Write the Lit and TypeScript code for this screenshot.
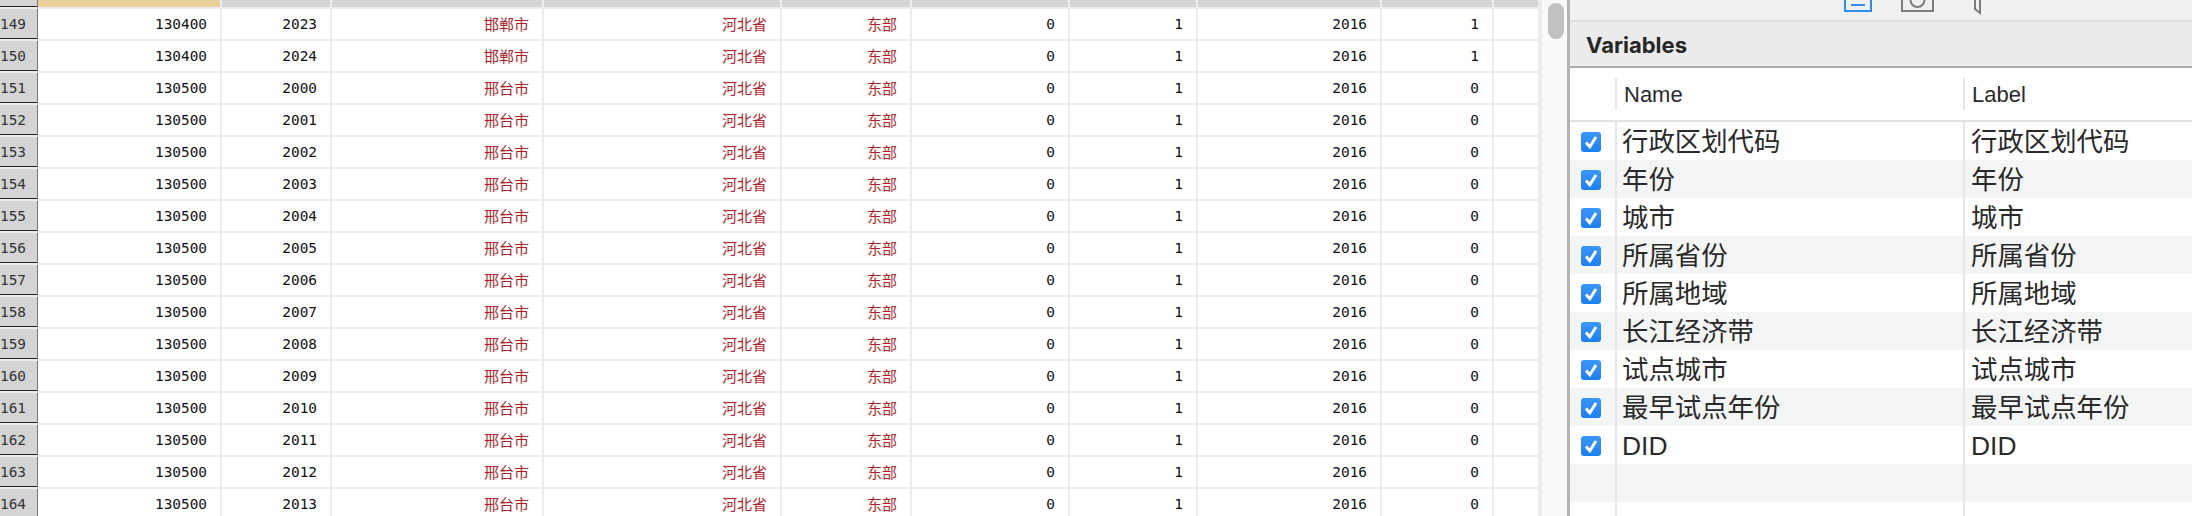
import { LitElement, html, css, svg } from 'lit';
import { customElement } from 'lit/decorators.js';

type Row = [number, number, number, string, string, string, number, number, number, number];

const rows: Row[] = [
  [149, 130400, 2023, '邯郸市', '河北省', '东部', 0, 1, 2016, 1],
  [150, 130400, 2024, '邯郸市', '河北省', '东部', 0, 1, 2016, 1],
];
for (let i = 0; i < 14; i++) {
  rows.push([151 + i, 130500, 2000 + i, '邢台市', '河北省', '东部', 0, 1, 2016, 0]);
}

const variables = ['行政区划代码', '年份', '城市', '所属省份', '所属地域', '长江经济带', '试点城市', '最早试点年份', 'DID'];

@customElement('app-root')
export class AppRoot extends LitElement {
  static override styles = css`
    :host {
      display: flex;
      width: 2192px;
      height: 516px;
      overflow: hidden;
      background: #fff;
      font-family: 'Liberation Sans', 'Noto Sans CJK SC', sans-serif;
    }

    /* Data grid */
    .grid {
      width: 1540px;
      height: 516px;
      flex: none;
      overflow: hidden;
    }

    .grid-row {
      display: grid;
      grid-template-columns: 38px 184px 110px 212px 238px 130px 158px 128px 184px 112px 46px;
      height: 32px;
      box-sizing: border-box;
    }

    .grid-head {
      height: 9px;
    }

    .grid-head > div {
      background: #d4d4d4;
      border-right: 2px solid #ececec;
      border-bottom: 2px solid #ececec;
      box-sizing: border-box;
    }

    .grid-head > .corner {
      border-right: 1px solid #777;
      box-shadow: inset 0 -1px 0 #222;
    }

    .grid-head > .active {
      background: #e9cf9c;
    }

    .cell {
      font-family: 'DejaVu Sans Mono', 'Noto Sans CJK SC', monospace;
      font-size: 14.4px;
      line-height: 30px;
      text-align: right;
      padding-right: 13px;
      color: #111;
      border-right: 2px solid #ececec;
      border-bottom: 2px solid #ececec;
      box-sizing: border-box;
      white-space: nowrap;
      overflow: hidden;
    }

    .cell.str {
      color: #b01c28;
      font-family: 'Noto Sans CJK SC', sans-serif;
      font-size: 15px;
    }

    .cell.num-head {
      background: #d4d4d4;
      color: #333;
      border-right: 1px solid #777;
      box-shadow: inset 0 -1px 0 #222;
      padding-right: 11px;
    }

    /* Properties panel */
    .panel {
      flex: 1;
      height: 516px;
      display: flex;
      min-width: 0;
    }

    .scroll-track {
      width: 27px;
      flex: none;
      background: #f9f9f9;
      border-left: 2px solid #ececec;
      padding: 3px 0 0 6px;
      box-sizing: border-box;
    }

    .scroll-thumb {
      width: 16px;
      height: 36px;
      border-radius: 8px;
      background: #c1c1c1;
    }

    .side {
      flex: 1;
      min-width: 0;
      border-left: 3px solid #b4b4b4;
      display: flex;
      flex-direction: column;
    }

    .toolbar {
      height: 22px;
      flex: none;
      background: #f0f0ee;
      border-bottom: 2px solid #dcdcdc;
      box-sizing: border-box;
      overflow: hidden;
    }

    .toolbar svg {
      display: block;
    }

    .title {
      height: 46px;
      flex: none;
      box-sizing: border-box;
      background: #ebebeb;
      border-bottom: 2px solid #adadad;
      padding-left: 16px;
      font-family: Inter, sans-serif;
      font-weight: 700;
      font-size: 22px;
      line-height: 46px;
      color: #262626;
    }

    .var-head,
    .var-row {
      display: grid;
      grid-template-columns: 45px 348px 1fr;
    }

    .var-head {
      height: 54px;
      flex: none;
      box-sizing: border-box;
      border-bottom: 2px solid #e3e3e3;
      padding-top: 10px;
      font-size: 22px;
      color: #2a2a2a;
    }

    .var-head > div {
      height: 32px;
      line-height: 34px;
      padding-left: 7px;
      border-left: 2px solid #e6e6e6;
    }

    .var-head > div:first-child {
      border-left: 0;
    }

    .var-row {
      height: 38px;
      flex: none;
      font-size: 26.4px;
      line-height: 40px;
      color: #2a2a2a;
    }

    .var-row:nth-child(even) {
      background: #f3f5f4;
    }

    .var-row > div {
      border-left: 2px solid #e6e6e6;
      padding-left: 5px;
      white-space: nowrap;
      overflow: hidden;
    }

    .var-row > div:last-child {
      padding-left: 6px;
    }

    .var-row > .check-cell {
      border-left: 0;
      padding: 10px 0 0 11px;
    }

    .check {
      display: block;
      width: 20px;
      height: 20px;
      border-radius: 3px;
      background: linear-gradient(#3a96ff, #1b7ff5);
    }

    .filler {
      flex: 1;
    }
  `;

  private toolbarIcons() {
    return html`<svg width="621" height="20" viewBox="0 0 621 20" fill="none">
      ${svg`
        <path d="M275 -6V11H301V-6" stroke="#2f8cf2" stroke-width="2"/>
        <path d="M281 5H295" stroke="#2f8cf2" stroke-width="2"/>
        <path d="M332 -6V11H363V-6" stroke="#7b7b7b" stroke-width="2"/>
        <circle cx="347.5" cy="0" r="7" stroke="#7b7b7b" stroke-width="2"/>
        <path d="M405 -6V9L410 13V-6" stroke="#7b7b7b" stroke-width="2"/>
      `}
    </svg>`;
  }

  private checkbox() {
    return html`<svg class="check" viewBox="0 0 20 20" fill="none">
      <path d="M5 10.5L8.8 14.8L15 5" stroke="#fff" stroke-width="3"/>
    </svg>`;
  }

  protected override render() {
    return html`
      <div class="grid">
        <div class="grid-row grid-head">
          <div class="corner"></div>
          <div class="active"></div>
          ${Array.from({ length: 9 }, () => html`<div></div>`)}
        </div>
        ${rows.map(
          (r) => html`<div class="grid-row">
            <div class="cell num-head">${r[0]}</div>
            ${r.slice(1).map(
              (v) => html`<div class="cell ${typeof v === 'string' ? 'str' : ''}">${v}</div>`,
            )}
            <div class="cell"></div>
          </div>`,
        )}
      </div>
      <div class="panel">
        <div class="scroll-track"><div class="scroll-thumb"></div></div>
        <div class="side">
          <div class="toolbar">${this.toolbarIcons()}</div>
          <div class="title">Variables</div>
          <div class="var-head">
            <div></div>
            <div>Name</div>
            <div>Label</div>
          </div>
          <div class="var-list">
            ${[...variables, '', ''].map(
              (name, i) => html`<div class="var-row">
                <div class="check-cell">${i < variables.length ? this.checkbox() : ''}</div>
                <div>${name}</div>
                <div>${name}</div>
              </div>`,
            )}
          </div>
          <div class="filler"></div>
        </div>
      </div>
    `;
  }
}

declare global {
  interface HTMLElementTagNameMap {
    'app-root': AppRoot;
  }
}
